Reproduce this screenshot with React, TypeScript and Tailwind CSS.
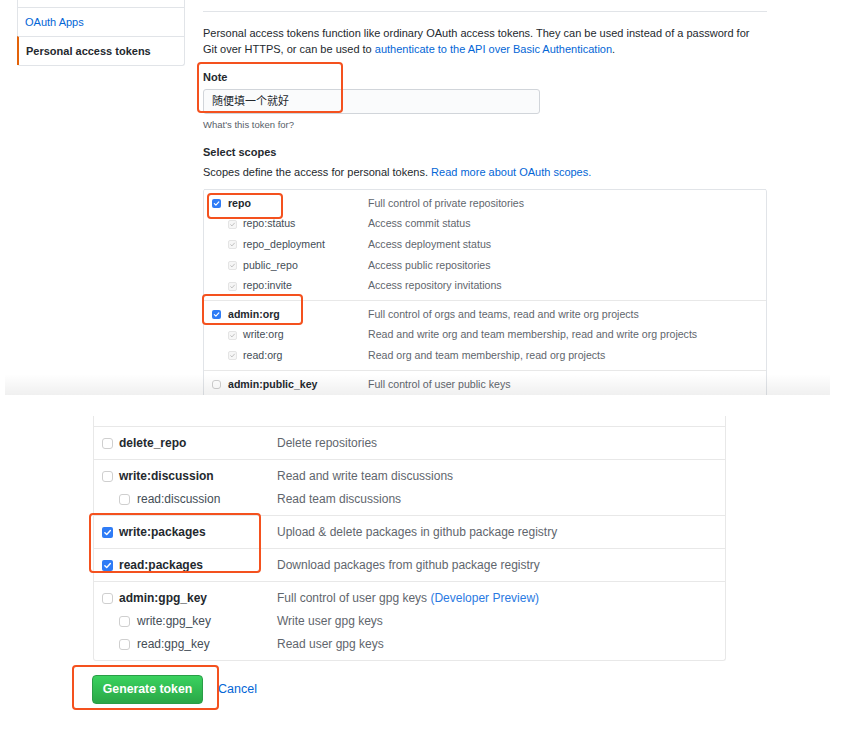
import React from "react";

type Scope = {
  name: string;
  desc: React.ReactNode;
  state: "on" | "off" | "inherited";
  sub?: boolean;
};

const topGroups: Scope[][] = [
  [
    { name: "repo", desc: "Full control of private repositories", state: "on" },
    { name: "repo:status", desc: "Access commit status", state: "inherited", sub: true },
    { name: "repo_deployment", desc: "Access deployment status", state: "inherited", sub: true },
    { name: "public_repo", desc: "Access public repositories", state: "inherited", sub: true },
    { name: "repo:invite", desc: "Access repository invitations", state: "inherited", sub: true },
  ],
  [
    { name: "admin:org", desc: "Full control of orgs and teams, read and write org projects", state: "on" },
    { name: "write:org", desc: "Read and write org and team membership, read and write org projects", state: "inherited", sub: true },
    { name: "read:org", desc: "Read org and team membership, read org projects", state: "inherited", sub: true },
  ],
  [{ name: "admin:public_key", desc: "Full control of user public keys", state: "off" }],
];

const bottomGroups: Scope[][] = [
  [{ name: "delete_repo", desc: "Delete repositories", state: "off" }],
  [
    { name: "write:discussion", desc: "Read and write team discussions", state: "off" },
    { name: "read:discussion", desc: "Read team discussions", state: "off", sub: true },
  ],
  [{ name: "write:packages", desc: "Upload & delete packages in github package registry", state: "on" }],
  [{ name: "read:packages", desc: "Download packages from github package registry", state: "on" }],
  [
    {
      name: "admin:gpg_key",
      desc: (
        <>
          Full control of user gpg keys <span className="text-[#2a7ae2]">(Developer Preview)</span>
        </>
      ),
      state: "off",
    },
    { name: "write:gpg_key", desc: "Write user gpg keys", state: "off", sub: true },
    { name: "read:gpg_key", desc: "Read user gpg keys", state: "off", sub: true },
  ],
];

function Box({ state, size }: { state: Scope["state"]; size: "sm" | "lg" }) {
  const dim = size === "sm" ? "w-[9px] h-[9px]" : "w-[11px] h-[11px]";
  if (state === "on") {
    return (
      <span className={`${dim} shrink-0 rounded-[2px] bg-[#2f7cf6] flex items-center justify-center`}>
        <svg viewBox="0 0 10 10" className="w-full h-full">
          <path d="M2.6 5.2 L4.3 6.9 L7.6 3.2" fill="none" stroke="#fff" strokeWidth="1.3" strokeLinecap="round" strokeLinejoin="round" />
        </svg>
      </span>
    );
  }
  if (state === "inherited") {
    return (
      <span className={`${dim} shrink-0 rounded-[2px] border border-[#e4e4e4] bg-[#f6f6f6] flex items-center justify-center`}>
        <svg viewBox="0 0 10 10" className="w-full h-full">
          <path d="M2.4 5.2 L4.2 7 L7.8 3" fill="none" stroke="#a8a8a8" strokeWidth="1" strokeLinecap="round" strokeLinejoin="round" />
        </svg>
      </span>
    );
  }
  return <span className={`${dim} shrink-0 rounded-[3px] border border-[#cfcfcf] bg-white`} />;
}

function ScopeTable({ groups, size }: { groups: Scope[][]; size: "sm" | "lg" }) {
  const sm = size === "sm";
  return (
    <>
      {groups.map((group, gi) => (
        <div key={gi} className={`border-t border-[#e8e8e8] pl-[8px] ${sm ? "py-[3.5px]" : "py-[4.5px]"}`}>
          {group.map((s) => (
            <div key={s.name} className={`flex items-center ${sm ? "h-[20.6px] text-[10.6px]" : "h-[23px] text-[12px]"}`}>
              <div className={`flex items-center shrink-0 ${sm ? "w-[156px]" : "w-[175px]"}`}>
                <div className={`flex items-center ${s.sub ? (sm ? "pl-[16px] gap-[6px]" : "pl-[17px] gap-[7px]") : sm ? "gap-[7px]" : "gap-[6px]"}`}>
                  <Box state={s.state} size={size} />
                  <span className={s.sub ? "text-[#444d56]" : "font-bold text-[#24292e]"}>{s.name}</span>
                </div>
              </div>
              <span className="text-[#5f666d] whitespace-nowrap">{s.desc}</span>
            </div>
          ))}
        </div>
      ))}
    </>
  );
}

function Mark({ className }: { className: string }) {
  return <div className={`absolute border-2 border-[#f4511e] rounded-[4px] pointer-events-none ${className}`} />;
}

export default function App() {
  return (
    <div className="relative w-[850px] h-[731px] bg-white overflow-hidden font-['Liberation_Sans','Noto_Sans_CJK_SC',Arial,sans-serif] text-[#24292e]">
      {/* top screenshot */}
      <div className="relative h-[395px] overflow-hidden">
        <div className="flex items-start pl-[17px]">
          <div className="w-[168px] shrink-0 border-x border-b border-[#e1e4e8] rounded-b-[3px] text-[11px]">
            <div className="h-[7px]" />
            <div className="h-[29px] border-t border-[#e1e4e8] flex items-center pl-[7px] text-[#0366d6]">OAuth Apps</div>
            <div className="h-[29px] border-t border-[#e1e4e8] border-l-2 border-l-[#e36209] -ml-px flex items-center pl-[7px] font-bold">
              Personal access tokens
            </div>
          </div>

          <div className="ml-[18px] w-[564px] shrink-0">
            <div className="h-[12px] border-b border-[#e1e4e8] overflow-hidden">
              <div className="text-[17px] leading-[17px] -mt-[17px] pl-px">New personal access token</div>
            </div>
            <p className="mt-[13px] text-[11px] leading-[16px] whitespace-nowrap">
              Personal access tokens function like ordinary OAuth access tokens. They can be used instead of a password for
              <br />
              Git over HTTPS, or can be used to{" "}
              <span className="text-[#0366d6]">authenticate to the API over Basic Authentication</span>.
            </p>
            <div className="mt-[12px] text-[11px] leading-[16px] font-bold">Note</div>
            <div className="mt-[4px] h-[25px] w-[337px] border border-[#d1d5da] rounded-[3px] bg-[#fafbfc] flex items-center pl-[8px] text-[11px]">
              随便填一个就好
            </div>
            <div className="mt-[4px] text-[9.5px] leading-[13px] text-[#586069]">What's this token for?</div>
            <div className="mt-[13px] text-[11px] leading-[16px] font-bold">Select scopes</div>
            <div className="mt-[4px] text-[11px] leading-[16px]">
              Scopes define the access for personal tokens.{" "}
              <span className="text-[#0366d6]">Read more about OAuth scopes.</span>
            </div>
            <div className="mt-[9px] border-x border-[#e1e4e8] rounded-t-[3px] [&>div:first-child]:border-t-[#e1e4e8]">
              <ScopeTable groups={topGroups} size="sm" />
            </div>
          </div>
        </div>
        <div className="absolute left-[5px] w-[825px] top-[374px] h-[21px] bg-gradient-to-b from-transparent to-black/[0.06] pointer-events-none" />
      </div>

      {/* bottom screenshot */}
      <div className="mt-[21px] ml-[93px] w-[633px] border-x border-b border-[#e8e8e8] rounded-b-[3px]">
        <div className="h-[10px]" />
        <ScopeTable groups={bottomGroups} size="lg" />
      </div>
      <div className="mt-[14px] ml-[92px] flex items-center">
        <button className="h-[29px] w-[111px] rounded-[4px] border border-[#2a9d47] bg-gradient-to-b from-[#3ad25f] to-[#2aa747] text-white font-bold text-[12.3px]">
          Generate token
        </button>
        <span className="ml-[15px] text-[12.5px] text-[#0366d6]">Cancel</span>
      </div>

      <Mark className="left-[197px] top-[62px] w-[146px] h-[51px]" />
      <Mark className="left-[207px] top-[193px] w-[76px] h-[26px]" />
      <Mark className="left-[202px] top-[294px] w-[101px] h-[31px]" />
      <Mark className="left-[89px] top-[513px] w-[172px] h-[60px]" />
      <Mark className="left-[72px] top-[665px] w-[147px] h-[45px]" />
    </div>
  );
}
